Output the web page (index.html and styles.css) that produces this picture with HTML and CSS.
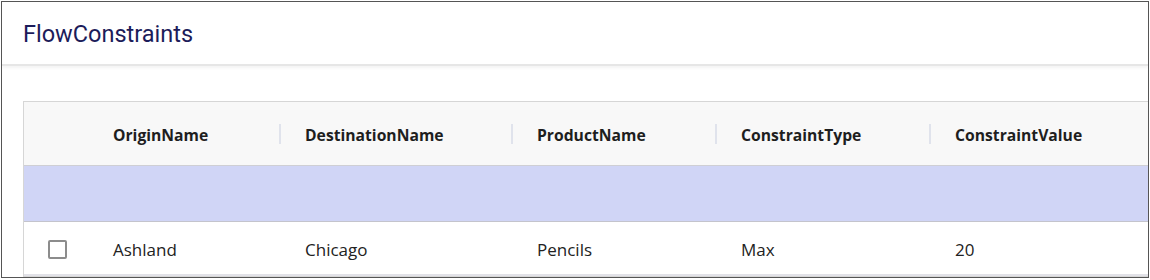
FILE: index.html
```html
<!DOCTYPE html>
<html lang="en">
  <head>
    <meta charset="UTF-8" />
    <title>FlowConstraints</title>
    <link rel="stylesheet" href="styles.css">
  </head>
  <body>
    <div class="frame">
      <div class="card-header">
        <h1>FlowConstraints</h1>
      </div>
      <div class="card-body">
        <div class="grid">
          <div class="row head">
            <div class="cell check"></div>
            <div class="cell">OriginName</div>
            <div class="cell sep">DestinationName</div>
            <div class="cell sep">ProductName</div>
            <div class="cell sep">ConstraintType</div>
            <div class="cell sep">ConstraintValue</div>
          </div>
          <!-- filter / new row strip -->
          <div class="row strip"></div>
          <div class="row">
            <div class="cell check"><span class="box"></span></div>
            <div class="cell">Ashland</div>
            <div class="cell">Chicago</div>
            <div class="cell">Pencils</div>
            <div class="cell">Max</div>
            <div class="cell">20</div>
          </div>
        </div>
      </div>
    </div>
  </body>
</html>
```

FILE: styles.css
```css
* {
  margin: 0;
  padding: 0;
  box-sizing: border-box;
}
body {
  background: #fff;
  padding: 1px;
}
.frame {
  width: 1148px;
  height: 277px;
  border: 1px solid #555;
  overflow: hidden;
  background: #fff;
}
.card-header {
  height: 64px;
  padding: 17px 0 0 21px;
  border-bottom: 2px solid #e6e6e6;
  box-shadow: 0 2px 3px rgba(0, 0, 0, 0.05);
}
.card-header h1 {
  font-family: Roboto, "Noto Sans", sans-serif;
  font-weight: 400;
  font-size: 23.5px;
  line-height: 30px;
  color: #1c1c5a;
}
.card-body {
  padding: 35px 0 0 21px;
}
.grid {
  border: 1px solid #d6d6d6;
  border-right: none;
  font-family: "Open Sans", "Noto Sans", sans-serif;
  font-size: 17px;
  color: #222;
}
.row {
  display: grid;
  grid-template-columns: 64px 192px 232px 204px 214px 1fr;
  align-items: center;
  height: 54px;
  padding-top: 2px;
  border-bottom: 2px solid #e2e2e8;
}
.row.head {
  height: 64px;
  padding-top: 3px;
  background: #f8f8f8;
  font-size: 15.7px;
  font-weight: 700;
  color: #1e1e1e;
  border-bottom: 1px solid #cfcfd4;
}
.row.strip {
  height: 56px;
  background: #d0d5f6;
  border-bottom: 1px solid #c4c4cc;
}
.cell {
  padding-left: 25px;
  position: relative;
  white-space: nowrap;
}
.cell.check {
  padding-left: 24px;
  display: flex;
}
.cell.sep::before {
  content: "";
  position: absolute;
  left: -1px;
  top: 50%;
  margin-top: -11px;
  width: 2px;
  height: 20px;
  background: #e0e3ec;
}
.box {
  width: 19px;
  height: 19px;
  border: 2px solid #8c8c8c;
  border-radius: 2px;
  background: #fff;
}
```
